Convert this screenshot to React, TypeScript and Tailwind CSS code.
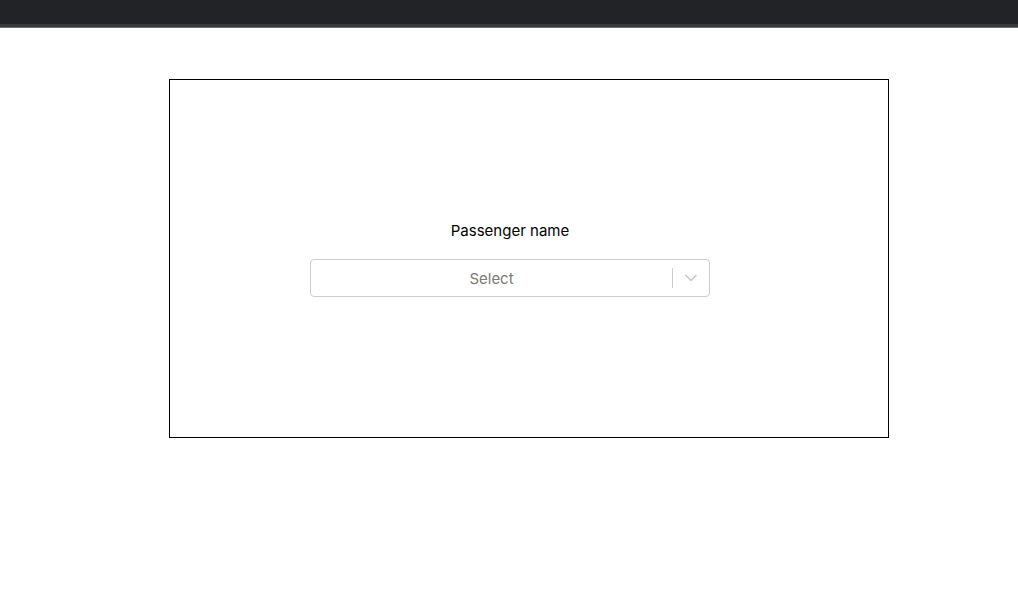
import { ChevronDown } from "lucide-react";

export default function App() {
  return (
    <div className="min-h-[616px] bg-white font-['Inter',sans-serif]">
      {/* Top bar */}
      <div className="h-6 bg-[#222326]" />
      <div className="h-[3px] bg-[#37383b]" />
      <div className="h-px bg-[#6e6f71]" />

      <div className="ml-[169px] mt-[51px] flex h-[359px] w-[720px] flex-col items-center justify-center border border-black pr-[38px]">
        <label className="pt-px text-[15px] leading-5 text-black">Passenger name</label>

        <div className="mt-[18px] flex h-[38px] w-[400px] items-center rounded-[4px] border border-[#cccccc] bg-white">
          <div className="flex-1 pt-[2px] text-center text-[15px] text-[#7a7a7a]">Select</div>
          <span className="h-5 w-px self-center bg-[#cccccc]" />
          <div className="flex items-center px-2 text-[#c4c4c4]">
            <ChevronDown className="h-5 w-5" strokeWidth={1.75} />
          </div>
        </div>
      </div>
    </div>
  );
}
